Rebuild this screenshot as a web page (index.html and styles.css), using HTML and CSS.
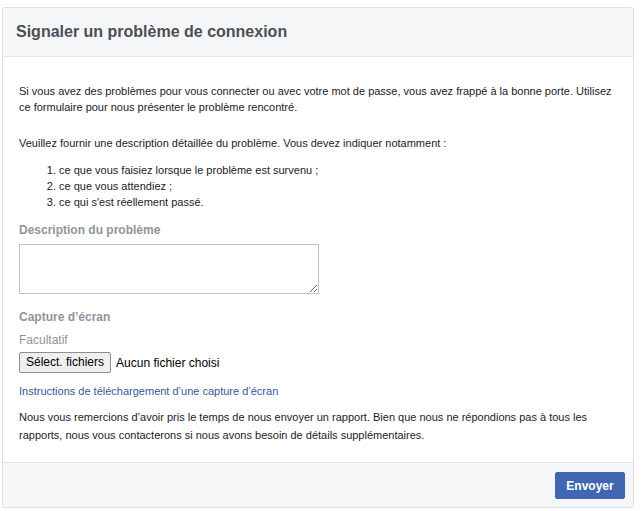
FILE: index.html
```html
<!DOCTYPE html>
<html lang="fr">
<head>
<meta charset="utf-8">
<title>Signaler un problème de connexion</title>
<link rel="stylesheet" href="styles.css">
</head>
<body>
<div class="dialog">
  <div class="dialog-header">
    <h2 class="dialog-title">Signaler un problème de connexion</h2>
  </div>
  <div class="dialog-body">
    <p class="para">Si vous avez des problèmes pour vous connecter ou avec votre mot de passe, vous avez frappé à la bonne porte. Utilisez ce formulaire pour nous présenter le problème rencontré.</p>
    <p class="para intro">Veuillez fournir une description détaillée du problème. Vous devez indiquer notamment :</p>
    <ol class="steps">
      <li>ce que vous faisiez lorsque le problème est survenu ;</li>
      <li>ce que vous attendiez ;</li>
      <li>ce qui s'est réellement passé.</li>
    </ol>
    <label class="field-label" for="desc">Description du problème</label>
    <textarea id="desc" class="desc"></textarea>
    <div class="field-label cap">Capture d’écran</div>
    <div class="optional">Facultatif</div>
    <div class="file-row">
      <span class="file-btn">Sélect. fichiers</span>
      <span class="file-name">Aucun fichier choisi</span>
    </div>
    <a class="link" href="#">Instructions de téléchargement d’une capture d’écran</a>
    <p class="para thanks">Nous vous remercions d’avoir pris le temps de nous envoyer un rapport. Bien que nous ne répondions pas à tous les rapports, nous vous contacterons si nous avons besoin de détails supplémentaires.</p>
  </div>
  <div class="dialog-footer">
    <button class="send" type="button">Envoyer</button>
  </div>
</div>
</body>
</html>
```
FILE: styles.css
```css
html, body {
  margin: 0;
  padding: 0;
  background: #ffffff;
}
body {
  font-family: "Liberation Sans", Arial, sans-serif;
  font-size: 12px;
  color: #1d2129;
  padding: 7px 0 0 2px;
}
.dialog {
  width: 630px;
  border: 1px solid #dddfe2;
  border-radius: 3px;
  background: #fff;
  overflow: hidden;
}
.dialog-header {
  background: #f5f6f7;
  border-bottom: 1px solid #e5e5e5;
  height: 48px;
  display: flex;
  align-items: center;
  padding: 0 13px;
}
.dialog-title {
  margin: 0;
  font-size: 16px;
  font-weight: bold;
  color: #4b4f56;
  line-height: 20px;
}
.dialog-body {
  padding: 26px 16px 18px 16px;
}
.para {
  margin: 0 0 20px 0;
  font-size: 11px;
  line-height: 16px;
}
.para.intro {
  margin-bottom: 11px;
}
.steps {
  margin: 0 0 12px 0;
  padding-left: 40px;
  font-size: 11px;
  line-height: 16px;
}
.field-label {
  display: block;
  font-weight: bold;
  color: #90949c;
  line-height: 16px;
  margin-bottom: 6px;
}
.desc {
  display: block;
  width: 300px;
  height: 50px;
  box-sizing: border-box;
  border: 1px solid #bec3c9;
  margin: 0 0 15px 0;
  padding: 3px;
  font-family: inherit;
  font-size: 12px;
}
.cap {
  margin-bottom: 7px;
}
.optional {
  color: #90949c;
  line-height: 16px;
  font-size: 12px;
  margin-bottom: 4px;
}
.file-row {
  display: flex;
  align-items: center;
  gap: 5px;
  margin-bottom: 10px;
}
.file-btn {
  font-size: 12px;
  line-height: 17px;
  padding: 1px 6px;
  border: 1px solid #8f8f8f;
  border-radius: 2px;
  background: #efefef;
  color: #000;
}
.file-name {
  font-size: 12px;
  color: #000;
}
.link {
  display: block;
  color: #365899;
  text-decoration: none;
  font-size: 11px;
  line-height: 16px;
  margin-bottom: 9px;
}
.thanks {
  line-height: 18px;
  margin-bottom: 0;
}
.dialog-footer {
  background: #f5f6f7;
  border-top: 1px solid #e5e5e5;
  display: flex;
  justify-content: flex-end;
  padding: 9px 8px 8px 8px;
}
.send {
  width: 70px;
  height: 27px;
  background: #4267b2;
  border: 1px solid #4267b2;
  border-radius: 2px;
  color: #fff;
  font-family: inherit;
  font-size: 12px;
  font-weight: bold;
  padding: 0;
}
```
